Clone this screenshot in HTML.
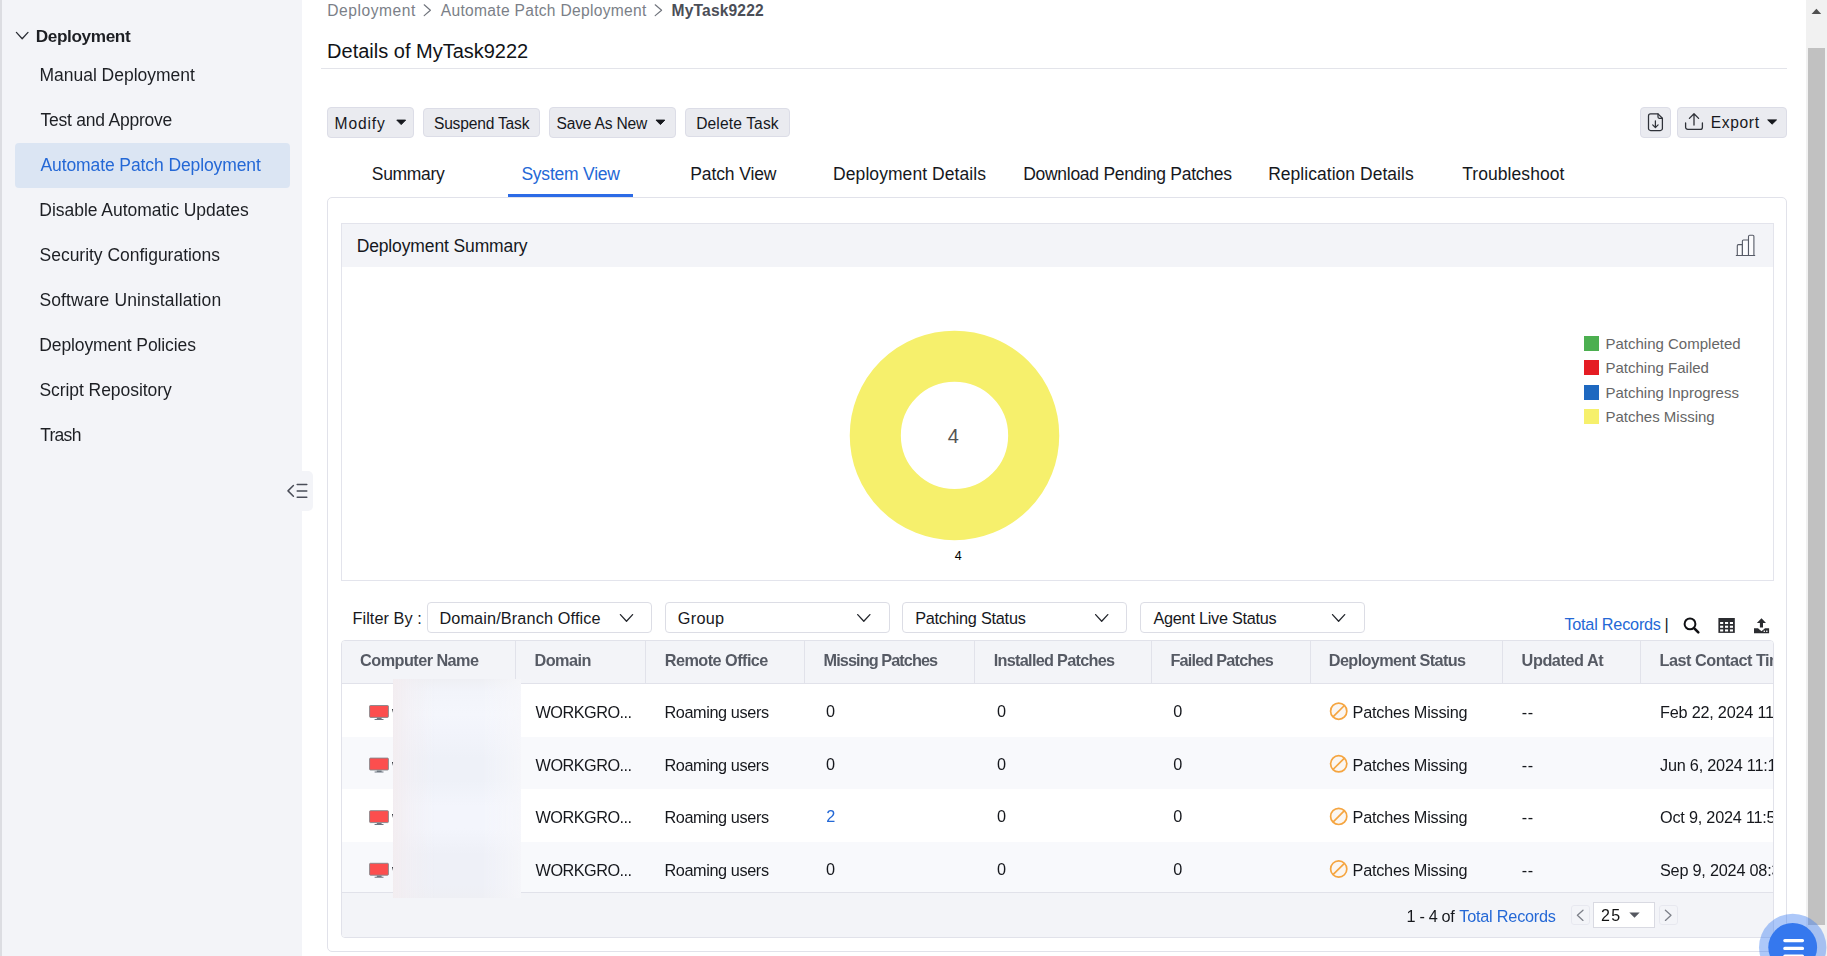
<!DOCTYPE html>
<html lang="en">
<head>
<meta charset="utf-8">
<title>Details of MyTask9222 - Automate Patch Deployment</title>
<style>
html,body{margin:0;padding:0;}
body{width:1827px;height:956px;overflow:hidden;position:relative;background:#fff;
  font-family:"Liberation Sans",Arial,sans-serif;color:#16181d;}
.t{position:absolute;white-space:nowrap;line-height:1;margin:0;padding:0;font-weight:400;}
.ar{font-family:"Liberation Sans",Arial,sans-serif;}
.abs{position:absolute;box-sizing:border-box;}
#strip{left:0;top:0;width:2px;height:956px;background:#dcdde2;}
#sidebar{left:2px;top:0;width:300px;height:956px;background:#f3f4f8;}
#sel{left:15px;top:143px;width:275px;height:44.6px;background:#dbe5f3;border-radius:4px;}
#handle{left:302px;top:471px;width:11px;height:39.7px;background:#f3f4f8;border-radius:0 5px 5px 0;}
#titleline{left:321px;top:68px;width:1466px;height:1px;background:#e3e4ea;}
.btn{background:#eaebf0;border:1px solid #dcdde7;border-radius:4px;}
#box{left:327px;top:197px;width:1460px;height:755px;border:1px solid #e1e2ea;border-radius:5px;background:#fff;}
#tabline{left:508.2px;top:194px;width:124.6px;height:3px;background:#2c6be6;}
#panel{left:341px;top:223px;width:1433px;height:358px;border:1px solid #e3e4ec;background:#fff;}
#panelhead{left:342px;top:224px;width:1431px;height:42.6px;background:#f3f4f8;}
.sel{background:#fff;border:1px solid #dcdde5;border-radius:4px;height:31px;top:602px;}
#tbl{left:341px;top:640px;width:1433px;height:298px;border:1px solid #e1e2ea;border-radius:4px;background:#fff;overflow:hidden;}
#thead{left:0;top:0;width:1431px;height:43px;background:#f3f4f8;border-bottom:1px solid #e1e2ea;}
.cd{top:0;width:1px;height:43px;background:#e1e2ea;}
.row{left:0;width:1431px;}
#tfoot{left:0;top:250.5px;width:1431px;height:46px;background:#f3f4f8;border-top:1px solid #e1e2ea;}
#clip{left:0;top:0;width:1773px;height:956px;overflow:hidden;pointer-events:none;}
#blur{left:393.1px;top:678.5px;width:128.2px;height:219.7px;
  background:linear-gradient(90deg,rgba(243,237,240,.95) 0%,rgba(243,238,242,.55) 12%,rgba(243,240,246,0) 32%,rgba(255,255,255,0) 70%,rgba(248,248,251,.75) 100%),
  linear-gradient(180deg,#eeeff4 0%,#f2f4fa 6%,#f4f6fc 16%,#f2f4fb 24%,#eef1f8 36%,#eef1f8 46%,#f3f5fc 58%,#f3f5fc 68%,#eef0f7 80%,#eef0f7 94%,#eeeff4 100%);}
#pgsel{left:1593px;top:902px;width:62px;height:25.6px;background:#fff;border:1px solid #d9dae2;}
.pgb{top:905px;width:19.5px;height:20px;border:1px solid #e7e8ef;border-radius:3px;background:#f3f4f8;}
#sbtrack{left:1806px;top:0;width:21px;height:956px;background:#f1f1f1;}
#sbthumb{left:1808px;top:48px;width:17px;height:877px;background:#c1c1c1;}
svg{position:absolute;left:0;top:0;overflow:visible;}
</style>
</head>
<body>
<div class="abs" id="strip"></div>
<nav class="abs" id="sidebar" aria-label="Deployment"></nav>
<div class="abs" id="sel"></div>
<div class="abs" id="handle"></div>
<div id="sidetext" style="position:absolute;left:0;top:0;width:302px;height:956px;will-change:transform">
<span class="t" id="sbh" style="left:35.70px;top:28.00px;font-size:17.2px;color:#1d1f24;font-weight:700;letter-spacing:-0.377px;">Deployment</span>
<span class="t" id="sb0" style="left:39.47px;top:67.00px;font-size:17.5px;color:#1d1f24;letter-spacing:-0.015px;">Manual Deployment</span>
<span class="t" id="sb1" style="left:40.52px;top:112.00px;font-size:17.5px;color:#1d1f24;letter-spacing:-0.233px;">Test and Approve</span>
<span class="t" id="sb2" style="left:40.49px;top:157.00px;font-size:17.5px;color:#2468d6;letter-spacing:-0.099px;">Automate Patch Deployment</span>
<span class="t" id="sb3" style="left:39.30px;top:202.00px;font-size:17.5px;color:#1d1f24;letter-spacing:-0.029px;">Disable Automatic Updates</span>
<span class="t" id="sb4" style="left:39.54px;top:247.00px;font-size:17.5px;color:#1d1f24;letter-spacing:-0.019px;">Security Configurations</span>
<span class="t" id="sb5" style="left:39.42px;top:292.00px;font-size:17.5px;color:#1d1f24;letter-spacing:0.127px;">Software Uninstallation</span>
<span class="t" id="sb6" style="left:39.23px;top:337.00px;font-size:17.5px;color:#1d1f24;letter-spacing:-0.104px;">Deployment Policies</span>
<span class="t" id="sb7" style="left:39.45px;top:382.00px;font-size:17.5px;color:#1d1f24;letter-spacing:-0.060px;">Script Repository</span>
<span class="t" id="sb8" style="left:40.13px;top:427.00px;font-size:17.5px;color:#1d1f24;letter-spacing:-0.711px;">Trash</span>
</div>

<header>
<span class="t" id="bc1" style="left:327.31px;top:3.00px;font-size:15.6px;color:#7b7f88;letter-spacing:0.535px;">Deployment</span>
<span class="t" id="bc2" style="left:440.81px;top:3.00px;font-size:15.6px;color:#7b7f88;letter-spacing:0.290px;">Automate Patch Deployment</span>
<span class="t" id="bc3" style="left:671.57px;top:3.00px;font-size:15.6px;color:#4b4e57;font-weight:700;letter-spacing:0.153px;">MyTask9222</span>
<span class="t" id="title" style="left:327.12px;top:41.00px;font-size:20px;color:#111317;letter-spacing:-0.004px;">Details of MyTask9222</span>
<div class="abs" id="titleline"></div>
</header>

<div class="abs btn" style="left:327px;top:107px;width:87px;height:30.6px"></div>
<div class="abs btn" style="left:423px;top:108px;width:117px;height:28.8px"></div>
<div class="abs btn" style="left:549px;top:107px;width:127px;height:30.6px"></div>
<div class="abs btn" style="left:685px;top:108px;width:105px;height:28.8px"></div>
<div class="abs btn" style="left:1640px;top:107px;width:30.6px;height:30.6px"></div>
<div class="abs btn" style="left:1677px;top:107px;width:110px;height:30.6px"></div>
<span class="t" id="b1" style="left:334.57px;top:116.00px;font-size:15.6px;color:#16181d;letter-spacing:0.858px;">Modify</span>
<span class="t" id="b2" style="left:433.95px;top:116.00px;font-size:15.6px;color:#16181d;letter-spacing:-0.198px;">Suspend Task</span>
<span class="t" id="b3" style="left:556.59px;top:116.00px;font-size:15.6px;color:#16181d;letter-spacing:-0.206px;">Save As New</span>
<span class="t" id="b4" style="left:696.16px;top:116.00px;font-size:15.6px;color:#16181d;letter-spacing:0.127px;">Delete Task</span>
<span class="t" id="b5" style="left:1710.82px;top:115.00px;font-size:15.6px;color:#16181d;letter-spacing:0.617px;">Export</span>

<div class="abs" id="box"></div>
<span class="t" id="tab0" style="left:371.85px;top:166.00px;font-size:17.5px;color:#16181d;letter-spacing:-0.337px;">Summary</span>
<span class="t" id="tab1" style="left:521.39px;top:166.00px;font-size:17.5px;color:#2468d6;letter-spacing:-0.220px;">System View</span>
<span class="t" id="tab2" style="left:690.22px;top:166.00px;font-size:17.5px;color:#16181d;letter-spacing:-0.115px;">Patch View</span>
<span class="t" id="tab3" style="left:833.11px;top:166.00px;font-size:17.5px;color:#16181d;letter-spacing:0.065px;">Deployment Details</span>
<span class="t" id="tab4" style="left:1023.13px;top:166.00px;font-size:17.5px;color:#16181d;letter-spacing:-0.271px;">Download Pending Patches</span>
<span class="t" id="tab5" style="left:1268.16px;top:166.00px;font-size:17.5px;color:#16181d;letter-spacing:0.032px;">Replication Details</span>
<span class="t" id="tab6" style="left:1462.20px;top:166.00px;font-size:17.5px;color:#16181d;letter-spacing:0.066px;">Troubleshoot</span>
<div class="abs" id="tabline"></div>

<section>
<div class="abs" id="panel"></div>
<div class="abs" id="panelhead"></div>
<span class="t" id="ptitle" style="left:356.63px;top:238.00px;font-size:17.5px;color:#16181d;letter-spacing:-0.126px;">Deployment Summary</span>
<span class="t ar" id="c4" style="left:947.83px;top:426.00px;font-size:20px;color:#555;">4</span>
<span class="t ar" id="c4s" style="left:954.85px;top:550.00px;font-size:12.5px;color:#000;">4</span>
<span class="t ar" id="lg0" style="left:1605.50px;top:336.00px;font-size:15px;color:#666;">Patching Completed</span>
<span class="t ar" id="lg1" style="left:1605.50px;top:360.00px;font-size:15px;color:#666;">Patching Failed</span>
<span class="t ar" id="lg2" style="left:1605.50px;top:385.00px;font-size:15px;color:#666;">Patching Inprogress</span>
<span class="t ar" id="lg3" style="left:1605.50px;top:409.00px;font-size:15px;color:#666;">Patches Missing</span>
</section>

<div class="abs sel" style="left:427px;width:225px"></div>
<div class="abs sel" style="left:665px;width:225px"></div>
<div class="abs sel" style="left:902px;width:225px"></div>
<div class="abs sel" style="left:1140px;width:225px"></div>
<span class="t" id="f0" style="left:352.54px;top:610.00px;font-size:16.25px;color:#16181d;letter-spacing:0.063px;">Filter By :</span>
<span class="t" id="f1" style="left:439.38px;top:610.00px;font-size:16.25px;color:#16181d;letter-spacing:0.137px;">Domain/Branch Office</span>
<span class="t" id="f2" style="left:677.69px;top:610.00px;font-size:16.25px;color:#16181d;letter-spacing:0.321px;">Group</span>
<span class="t" id="f3" style="left:915.13px;top:610.00px;font-size:16.25px;color:#16181d;letter-spacing:-0.222px;">Patching Status</span>
<span class="t" id="f4" style="left:1153.49px;top:610.00px;font-size:16.25px;color:#16181d;letter-spacing:-0.258px;">Agent Live Status</span>
<span class="t" id="tr" style="left:1564.38px;top:616.00px;font-size:16.25px;color:#2468d6;letter-spacing:-0.227px;">Total Records</span>
<span class="t" id="trbar" style="left:1664.60px;top:616.00px;font-size:16.25px;color:#16181d;">|</span>

<div class="abs" id="tbl">
  <div class="abs" id="thead"></div>
  <div class="abs cd" style="left:172.5px"></div>
  <div class="abs cd" style="left:302.5px"></div>
  <div class="abs cd" style="left:461.5px"></div>
  <div class="abs cd" style="left:631.5px"></div>
  <div class="abs cd" style="left:808.5px"></div>
  <div class="abs cd" style="left:967.5px"></div>
  <div class="abs cd" style="left:1159.5px"></div>
  <div class="abs cd" style="left:1297.5px"></div>
  <div class="abs row" style="top:43px;height:52.5px;background:#fff"></div>
  <div class="abs row" style="top:95.5px;height:52.5px;background:#f8f9fc"></div>
  <div class="abs row" style="top:148px;height:52.5px;background:#fff"></div>
  <div class="abs row" style="top:200.5px;height:50px;background:#f8f9fc"></div>
  <div class="abs" id="tfoot"></div>
</div>
<div class="abs" id="clip">
<span class="t" id="h0" style="left:360.09px;top:652.00px;font-size:16.25px;color:#565a64;font-weight:700;letter-spacing:-0.548px;">Computer Name</span>
<span class="t" id="h1" style="left:534.46px;top:652.00px;font-size:16.25px;color:#565a64;font-weight:700;letter-spacing:-0.499px;">Domain</span>
<span class="t" id="h2" style="left:664.81px;top:652.00px;font-size:16.25px;color:#565a64;font-weight:700;letter-spacing:-0.548px;">Remote Office</span>
<span class="t" id="h3" style="left:823.55px;top:652.00px;font-size:16.25px;color:#565a64;font-weight:700;letter-spacing:-0.911px;">Missing Patches</span>
<span class="t" id="h4" style="left:993.71px;top:652.00px;font-size:16.25px;color:#565a64;font-weight:700;letter-spacing:-0.710px;">Installed Patches</span>
<span class="t" id="h5" style="left:1170.48px;top:652.00px;font-size:16.25px;color:#565a64;font-weight:700;letter-spacing:-0.805px;">Failed Patches</span>
<span class="t" id="h6" style="left:1328.81px;top:652.00px;font-size:16.25px;color:#565a64;font-weight:700;letter-spacing:-0.620px;">Deployment Status</span>
<span class="t" id="h7" style="left:1521.61px;top:652.00px;font-size:16.25px;color:#565a64;font-weight:700;letter-spacing:-0.446px;">Updated At</span>
<span class="t" id="h8" style="left:1659.60px;top:652.00px;font-size:16.25px;color:#565a64;font-weight:700;letter-spacing:-0.504px;">Last Contact Time</span>
<span class="t" id="r0w" style="left:392.00px;top:704.00px;font-size:16.25px;color:#2a2d34;">w</span>
<span class="t" id="r0a" style="left:535.52px;top:704.00px;font-size:16.25px;color:#16181d;letter-spacing:-0.505px;">WORKGRO...</span>
<span class="t" id="r0b" style="left:664.48px;top:704.00px;font-size:16.25px;color:#16181d;letter-spacing:-0.394px;">Roaming users</span>
<span class="t" id="r0c" style="left:826.02px;top:703.00px;font-size:16.25px;color:#16181d;">0</span>
<span class="t" id="r0d" style="left:997.08px;top:703.00px;font-size:16.25px;color:#16181d;">0</span>
<span class="t" id="r0e" style="left:1173.31px;top:703.00px;font-size:16.25px;color:#16181d;">0</span>
<span class="t" id="r0f" style="left:1352.58px;top:704.00px;font-size:16.25px;color:#16181d;letter-spacing:-0.242px;">Patches Missing</span>
<span class="t" id="r0g" style="left:1521.66px;top:704.00px;font-size:16.25px;color:#16181d;letter-spacing:0.793px;">--</span>
<span class="t" id="r0h" style="left:1660.00px;top:704.00px;font-size:16.25px;color:#16181d;letter-spacing:-0.220px;">Feb 22, 2024 11:47 AM</span>
<span class="t" id="r1w" style="left:392.00px;top:757.00px;font-size:16.25px;color:#2a2d34;">w</span>
<span class="t" id="r1a" style="left:535.61px;top:757.00px;font-size:16.25px;color:#16181d;letter-spacing:-0.515px;">WORKGRO...</span>
<span class="t" id="r1b" style="left:664.48px;top:757.00px;font-size:16.25px;color:#16181d;letter-spacing:-0.395px;">Roaming users</span>
<span class="t" id="r1c" style="left:825.99px;top:756.00px;font-size:16.25px;color:#16181d;">0</span>
<span class="t" id="r1d" style="left:996.96px;top:756.00px;font-size:16.25px;color:#16181d;">0</span>
<span class="t" id="r1e" style="left:1173.32px;top:756.00px;font-size:16.25px;color:#16181d;">0</span>
<span class="t" id="r1f" style="left:1352.59px;top:757.00px;font-size:16.25px;color:#16181d;letter-spacing:-0.243px;">Patches Missing</span>
<span class="t" id="r1g" style="left:1521.80px;top:757.00px;font-size:16.25px;color:#16181d;letter-spacing:0.643px;">--</span>
<span class="t" id="r1h" style="left:1660.00px;top:757.00px;font-size:16.25px;color:#16181d;letter-spacing:-0.220px;">Jun 6, 2024 11:13 AM</span>
<span class="t" id="r2w" style="left:392.00px;top:809.00px;font-size:16.25px;color:#2a2d34;">w</span>
<span class="t" id="r2a" style="left:535.52px;top:809.00px;font-size:16.25px;color:#16181d;letter-spacing:-0.505px;">WORKGRO...</span>
<span class="t" id="r2b" style="left:664.48px;top:809.00px;font-size:16.25px;color:#16181d;letter-spacing:-0.394px;">Roaming users</span>
<span class="t" id="r2c" style="left:826.24px;top:808.00px;font-size:16.25px;color:#2468d6;">2</span>
<span class="t" id="r2d" style="left:997.08px;top:808.00px;font-size:16.25px;color:#16181d;">0</span>
<span class="t" id="r2e" style="left:1173.31px;top:808.00px;font-size:16.25px;color:#16181d;">0</span>
<span class="t" id="r2f" style="left:1352.58px;top:809.00px;font-size:16.25px;color:#16181d;letter-spacing:-0.242px;">Patches Missing</span>
<span class="t" id="r2g" style="left:1521.66px;top:809.00px;font-size:16.25px;color:#16181d;letter-spacing:0.793px;">--</span>
<span class="t" id="r2h" style="left:1660.00px;top:809.00px;font-size:16.25px;color:#16181d;letter-spacing:-0.220px;">Oct 9, 2024 11:52 AM</span>
<span class="t" id="r3w" style="left:392.00px;top:862.00px;font-size:16.25px;color:#2a2d34;">w</span>
<span class="t" id="r3a" style="left:535.61px;top:862.00px;font-size:16.25px;color:#16181d;letter-spacing:-0.515px;">WORKGRO...</span>
<span class="t" id="r3b" style="left:664.48px;top:862.00px;font-size:16.25px;color:#16181d;letter-spacing:-0.395px;">Roaming users</span>
<span class="t" id="r3c" style="left:825.99px;top:861.00px;font-size:16.25px;color:#16181d;">0</span>
<span class="t" id="r3d" style="left:996.96px;top:861.00px;font-size:16.25px;color:#16181d;">0</span>
<span class="t" id="r3e" style="left:1173.32px;top:861.00px;font-size:16.25px;color:#16181d;">0</span>
<span class="t" id="r3f" style="left:1352.59px;top:862.00px;font-size:16.25px;color:#16181d;letter-spacing:-0.243px;">Patches Missing</span>
<span class="t" id="r3g" style="left:1521.80px;top:862.00px;font-size:16.25px;color:#16181d;letter-spacing:0.643px;">--</span>
<span class="t" id="r3h" style="left:1660.00px;top:862.00px;font-size:16.25px;color:#16181d;letter-spacing:-0.220px;">Sep 9, 2024 08:31 AM</span>
</div>
<div class="abs" id="blur"></div>
<div class="abs" id="pgsel"></div>
<div class="abs pgb" style="left:1570.5px"></div>
<div class="abs pgb" style="left:1658.5px"></div>
<span class="t" id="ft1" style="left:1406.61px;top:908.00px;font-size:16.25px;color:#16181d;letter-spacing:-0.362px;">1 - 4 of</span>
<span class="t" id="ft2" style="left:1459.26px;top:908.00px;font-size:16.25px;color:#2468d6;letter-spacing:-0.217px;">Total Records</span>
<span class="t ar" id="ps" style="left:1600.95px;top:908.00px;font-size:16px;color:#111;letter-spacing:1.388px;">25</span>

<div class="abs" id="sbtrack"></div>
<div class="abs" id="sbthumb"></div>

<svg width="1827" height="956" viewBox="0 0 1827 956" aria-hidden="true">
<!--ICONS-->
<g id="ic-sb-chev" fill="none" stroke="#2a2d34" stroke-width="1.3" stroke-linecap="round" stroke-linejoin="round"><polyline points="16.4,32.4 22.2,38.8 28,32.4"/></g>
<g id="ic-bc" fill="none" stroke="#70747c" stroke-width="1.2" stroke-linecap="round" stroke-linejoin="round"><polyline points="424.2,4.8 430.4,10.2 424.2,15.6"/><polyline points="655.2,4.8 661.6,10.2 655.2,15.6"/></g>
<g id="ic-collapse" fill="none" stroke="#4a4d58" stroke-width="1.5" stroke-linecap="round" stroke-linejoin="round"><polyline points="293.4,485.5 288,490.9 293.4,496.3"/><path d="M297.2,484.6H306.8M297.2,490.9H306.8M297.2,497.2H306.8"/></g>
<g id="ic-carets" fill="#16181d" stroke="#16181d" stroke-width="1" stroke-linejoin="round"><path d="M396.8,120.1h8.8l-4.4,4.5z"/><path d="M656.0,120.1h8.8l-4.4,4.5z"/><path d="M1767.7,119.9h8.8l-4.4,4.3z"/></g>
<g id="ic-file" fill="none" stroke="#2e3138" stroke-width="1.25" stroke-linecap="round" stroke-linejoin="round"><path d="M1650.6,113.9h7.4l4.4,4.4v10.1a2.1,2.1 0 0 1 -2.1,2.1h-9.7a2.1,2.1 0 0 1 -2.1,-2.1v-12.4a2.1,2.1 0 0 1 2.1,-2.1z"/><path d="M1658,113.9v3.2a1.2,1.2 0 0 0 1.2,1.2h3.2"/><path d="M1655.4,120.8v6.6M1652.7,124.9l2.7,2.7l2.7,-2.7"/></g>
<g id="ic-export" fill="none" stroke="#2e3138" stroke-width="1.3" stroke-linecap="round" stroke-linejoin="round"><path d="M1685.6,123v4.2a2.2,2.2 0 0 0 2.2,2.2h12.4a2.2,2.2 0 0 0 2.2,-2.2v-4.2"/><path d="M1694,114v11M1689.4,118.4l4.6,-4.6l4.6,4.6"/></g>
<g id="ic-chart" fill="#fbfbfd" stroke="#565a66" stroke-width="1.1" stroke-linejoin="round" stroke-linecap="round"><path d="M1737.3,255.5v-9.8a1.1,1.1 0 0 1 1.1,-1.1h4v10.9"/><path d="M1742.4,255.5v-14.4a1.1,1.1 0 0 1 1.1,-1.1h5v15.5"/><path d="M1748.5,255.5v-19a1.2,1.2 0 0 1 1.2,-1.2h3a1.2,1.2 0 0 1 1.2,1.2v19"/><path d="M1736.3,255.5h18.4" fill="none"/></g>
<g id="ic-donut"><circle cx="954.5" cy="435.4" r="79.2" fill="none" stroke="#f6f06c" stroke-width="51.1"/></g>
<g id="ic-legend"><rect x="1584" y="336" width="15" height="15" fill="#4caf50"/><rect x="1584" y="360" width="15" height="15" fill="#e51c23"/><rect x="1584" y="385" width="15" height="15" fill="#1e68c0"/><rect x="1584" y="409" width="15" height="15" fill="#f6f06c"/></g>
<g id="ic-selchev" fill="none" stroke="#23262c" stroke-width="1.3" stroke-linecap="round" stroke-linejoin="round"><polyline points="620.4,614.6 626.5,621.2 632.6,614.6"/><polyline points="857.7,614.6 863.8,621.2 869.9,614.6"/><polyline points="1095.6,614.6 1101.7,621.2 1107.8,614.6"/><polyline points="1332.5,614.6 1338.6,621.2 1344.7,614.6"/></g>
<g id="ic-search" fill="none" stroke="#101114" stroke-linecap="round"><circle cx="1690" cy="623.9" r="5.4" stroke-width="2"/><path d="M1694.3,628.3l4,4.1" stroke-width="2.6"/></g>
<g id="ic-grid"><rect x="1718.4" y="618" width="16.4" height="14.9" fill="#2b2c30"/><g fill="#fff"><rect x="1720.1" y="622" width="3.1" height="2"/><rect x="1725" y="622" width="3.1" height="2"/><rect x="1729.9" y="622" width="3.1" height="2"/><rect x="1720.1" y="625.7" width="3.1" height="2.1"/><rect x="1725" y="625.7" width="3.1" height="2.1"/><rect x="1729.9" y="625.7" width="3.1" height="2.1"/><rect x="1720.1" y="629.4" width="3.1" height="2.1"/><rect x="1725" y="629.4" width="3.1" height="2.1"/><rect x="1729.9" y="629.4" width="3.1" height="2.1"/></g></g>
<g id="ic-upload" fill="#2b2c30"><path d="M1761.5,618.2l4.5,4.7h-3v4.7h-3.1v-4.7h-3z"/><path d="M1754,628.3h4l3.5,2.9l3.5,-2.9h4.1v5h-15.1z"/><rect x="1763.6" y="630.6" width="1.4" height="1.3" fill="#fff"/><rect x="1766.1" y="630.6" width="1.4" height="1.3" fill="#fff"/></g>
<g id="ic-rows">
<g class="mon" transform="translate(0,0)"><rect x="369.6" y="705.5" width="18.8" height="11.9" rx="0.8" fill="#fc4e4e" stroke="#82868a" stroke-width="0.9"/><path d="M376.8,717.8h4.8v1.1h-4.8zM374.6,718.9h8.9v1h-8.9z" fill="#6d7680"/></g>
<g class="mon" transform="translate(0,52.6)"><rect x="369.6" y="705.5" width="18.8" height="11.9" rx="0.8" fill="#fc4e4e" stroke="#82868a" stroke-width="0.9"/><path d="M376.8,717.8h4.8v1.1h-4.8zM374.6,718.9h8.9v1h-8.9z" fill="#6d7680"/></g>
<g class="mon" transform="translate(0,105.2)"><rect x="369.6" y="705.5" width="18.8" height="11.9" rx="0.8" fill="#fc4e4e" stroke="#82868a" stroke-width="0.9"/><path d="M376.8,717.8h4.8v1.1h-4.8zM374.6,718.9h8.9v1h-8.9z" fill="#6d7680"/></g>
<g class="mon" transform="translate(0,157.8)"><rect x="369.6" y="705.5" width="18.8" height="11.9" rx="0.8" fill="#fc4e4e" stroke="#82868a" stroke-width="0.9"/><path d="M376.8,717.8h4.8v1.1h-4.8zM374.6,718.9h8.9v1h-8.9z" fill="#6d7680"/></g>
<g class="ban" transform="translate(0,0)" fill="#fbf6f1" stroke="#f5a540" stroke-width="1.7"><circle cx="1338.7" cy="711.2" r="8.1"/><path d="M1333,716.9l11.4,-11.4" fill="none"/></g>
<g class="ban" transform="translate(0,52.6)" fill="#fbf6f1" stroke="#f5a540" stroke-width="1.7"><circle cx="1338.7" cy="711.2" r="8.1"/><path d="M1333,716.9l11.4,-11.4" fill="none"/></g>
<g class="ban" transform="translate(0,105.2)" fill="#fbf6f1" stroke="#f5a540" stroke-width="1.7"><circle cx="1338.7" cy="711.2" r="8.1"/><path d="M1333,716.9l11.4,-11.4" fill="none"/></g>
<g class="ban" transform="translate(0,157.8)" fill="#fbf6f1" stroke="#f5a540" stroke-width="1.7"><circle cx="1338.7" cy="711.2" r="8.1"/><path d="M1333,716.9l11.4,-11.4" fill="none"/></g>
</g>
<g id="ic-pg" fill="none" stroke="#7d8089" stroke-width="1.3" stroke-linecap="round" stroke-linejoin="round"><polyline points="1583,910.3 1577.4,915.3 1583,920.4"/><polyline points="1665.4,910.3 1671,915.3 1665.4,920.4"/></g>
<path id="ic-pgcaret" d="M1629.3,912.5h10.4l-5.2,5.2z" fill="#555860"/>
<g id="ic-scroll"><path d="M1816.4,8.8l4.8,5.2h-9.6z" fill="#505050"/></g>
<g id="ic-chat"><circle cx="1792.7" cy="947.4" r="33.7" fill="#3b7df0" fill-opacity="0.42"/><circle cx="1792.7" cy="947.4" r="24.4" fill="#3578ee"/><g stroke="#fff" stroke-width="3.2" stroke-linecap="round"><path d="M1784.8,940.6h17.7M1784.8,948.4h17.7M1784.8,956.2h17.7"/></g></g>
</svg>
</body>
</html>
